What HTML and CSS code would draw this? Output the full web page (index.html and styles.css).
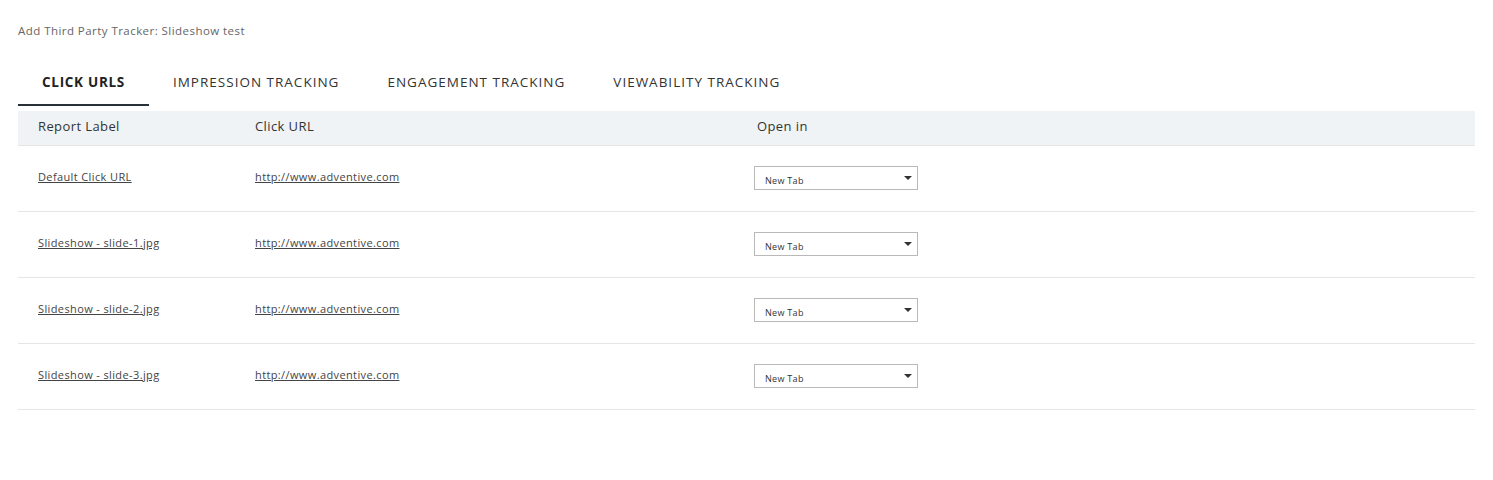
FILE: index.html
```html
<!DOCTYPE html>
<html lang="en">
<head>
  <meta charset="UTF-8" />
  <title>Add Third Party Tracker</title>
  <link rel="stylesheet" href="styles.css">
</head>
<body>
  <div class="page">
    <div class="title">Add Third Party Tracker: Slideshow test</div>

    <div class="tabs">
      <div class="tab active">CLICK URLS</div>
      <div class="tab">IMPRESSION TRACKING</div>
      <div class="tab">ENGAGEMENT TRACKING</div>
      <div class="tab">VIEWABILITY TRACKING</div>
    </div>

    <div class="grid">
      <div class="row head">
        <div class="cell">Report Label</div>
        <div class="cell">Click URL</div>
        <div class="cell">Open in</div>
      </div>
      <div class="row">
        <div class="cell"><a href="#">Default Click URL</a></div>
        <div class="cell"><a href="#">http://www.adventive.com</a></div>
        <div class="cell sel-cell"><div class="select">New Tab<span class="caret"></span></div></div>
      </div>
      <div class="row">
        <div class="cell"><a href="#">Slideshow - slide-1.jpg</a></div>
        <div class="cell"><a href="#">http://www.adventive.com</a></div>
        <div class="cell sel-cell"><div class="select">New Tab<span class="caret"></span></div></div>
      </div>
      <div class="row">
        <div class="cell"><a href="#">Slideshow - slide-2.jpg</a></div>
        <div class="cell"><a href="#">http://www.adventive.com</a></div>
        <div class="cell sel-cell"><div class="select">New Tab<span class="caret"></span></div></div>
      </div>
      <div class="row">
        <div class="cell"><a href="#">Slideshow - slide-3.jpg</a></div>
        <div class="cell"><a href="#">http://www.adventive.com</a></div>
        <div class="cell sel-cell"><div class="select">New Tab<span class="caret"></span></div></div>
      </div>
    </div>
  </div>
</body>
</html>
```

FILE: styles.css
```css
body {
  margin: 0;
  font-family: "Open Sans", Arial, sans-serif;
  color: #333;
  background: #fff;
}
.page {
  padding: 0 18px;
}
.title {
  padding-top: 23px;
  font-size: 11.5px;
  color: #666;
  line-height: 15px;
  letter-spacing: 0.45px;
}
.tabs {
  display: flex;
  margin-top: 35px;
}
.tab {
  padding: 0 24px;
  font-size: 13.5px;
  line-height: 18px;
  height: 31px;
  border-bottom: 2px solid transparent;
  color: #333;
  letter-spacing: 1px;
}
.tab.active {
  font-weight: 700;
  color: #222;
  letter-spacing: 0.7px;
  border-bottom-color: #283137;
}
.grid {
  margin-top: 5px;
}
.row {
  display: grid;
  grid-template-columns: 217px 502px 1fr;
  height: 65px;
  align-items: center;
  border-bottom: 1px solid #e6e6e6;
}
.row.head {
  height: 34px;
  background: #f0f3f6;
  font-size: 13px;
  color: #333;
  letter-spacing: 0.4px;
}
.cell {
  padding-left: 20px;
  padding-bottom: 8px;
}
.head .cell {
  padding-bottom: 4px;
}
.row a {
  font-size: 11px;
  color: #444;
  text-decoration: underline;
  letter-spacing: 0.38px;
}
.sel-cell {
  padding-left: 17px;
  padding-bottom: 2px;
}
.select {
  position: relative;
  width: 152px;
  height: 16px;
  padding: 6px 0 0 10px;
  line-height: 16px;
  border: 1px solid #b9b9b9;
  font-size: 9px;
  color: #333;
  letter-spacing: 0.3px;
}
.caret {
  position: absolute;
  right: 5px;
  top: 9px;
  border-left: 4px solid transparent;
  border-right: 4px solid transparent;
  border-top: 4px solid #333;
}
```
